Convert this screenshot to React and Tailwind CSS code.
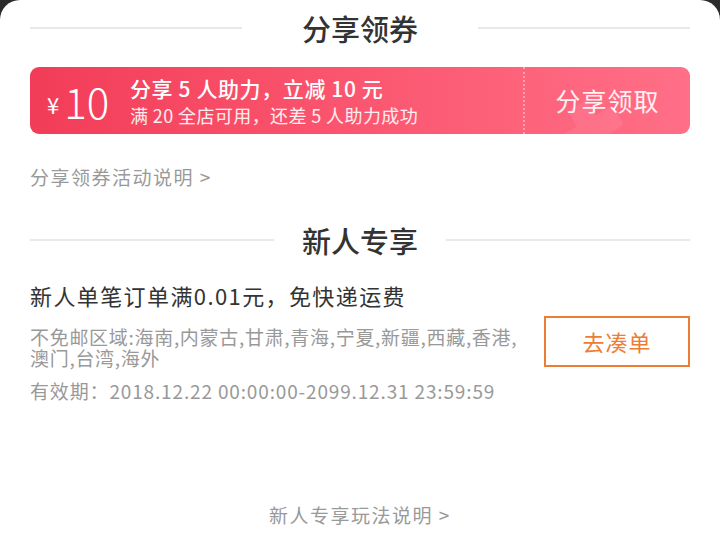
const font = { fontFamily: '"Noto Sans CJK SC", "Noto Sans", sans-serif' };

const SectionTitle = ({ children, gap }) => (
  <div className="flex items-center h-[40px]">
    <div className="flex-1 h-[2px] bg-[#e9e9e9]" />
    <div className={`text-[29px] font-medium text-[#333] leading-[40px] ${gap}`}>{children}</div>
    <div className="flex-1 h-[2px] bg-[#e9e9e9]" />
  </div>
);

const Coupon = () => (
  <div className="mt-[19px] h-[67px] rounded-[9px] flex overflow-hidden bg-gradient-to-r from-[#f23c58] via-[#fb5670] to-[#ff6f87] text-white">
    <div className="flex items-center pl-[17px] w-[100px]">
      <span className="text-[22px] leading-none mt-[6px]">¥</span>
      <span className="text-[42px] font-light leading-none ml-[5px]">10</span>
    </div>
    <div className="flex-1 flex flex-col justify-center">
      <div className="text-[21px] font-medium leading-[26px] tracking-[0.6px]">分享 5 人助力，立减 10 元</div>
      <div className="text-[18px] leading-[24px] text-white/90 mt-[2px] tracking-[0.4px]">满 20 全店可用，还差 5 人助力成功</div>
    </div>
    <div className="relative w-[167px] flex items-center justify-center border-l-2 border-dotted border-white/40">
      <svg className="absolute left-[20px] top-[20px]" width="110" height="60" viewBox="0 0 110 60">
        <g fill="#ffffff" opacity="0.07" transform="rotate(-30 55 40)">
          <rect x="35" y="10" width="22" height="60" rx="4" />
          <rect x="15" y="28" width="62" height="22" rx="4" />
        </g>
      </svg>
      <span className="relative text-[25px] text-white/90 tracking-[1px]">分享领取</span>
    </div>
  </div>
);

export default function App() {
  return (
    <div className="w-[720px] h-[556px] bg-[#2b2b2b]" style={font}>
      <div className="h-full bg-white rounded-t-[20px] px-[30px] pt-[8px] pb-[27px] flex flex-col">
        <SectionTitle gap="px-[60px]">分享领券</SectionTitle>
        <Coupon />
        <div className="mt-[29px] text-[19px] leading-[28px] text-[#999] tracking-[1.5px]">分享领券活动说明 &gt;</div>

        <div className="mt-[29px]">
          <SectionTitle gap="px-[28px]">新人专享</SectionTitle>
        </div>
        <div className="mt-[20px] text-[22px] leading-[30px] text-[#333] tracking-[1.4px]">新人单笔订单满0.01元，免快递运费</div>
        <div className="mt-[6px] flex items-start justify-between">
          <div className="pt-[10px] text-[19px] leading-[21px] text-[#999]">
            <div className="tracking-[0.7px]">不免邮区域:海南,内蒙古,甘肃,青海,宁夏,新疆,西藏,香港,</div>
            <div className="tracking-[0.7px]">澳门,台湾,海外</div>
            <div className="mt-[12px] tracking-[0.85px]">有效期：2018.12.22 00:00:00-2099.12.31 23:59:59</div>
          </div>
          <button className="w-[146px] h-[51px] border-2 border-[#ec7d33] text-[#ec7d33] text-[22px] tracking-[1px] flex items-center justify-center">
            去凑单
          </button>
        </div>

        <div className="mt-auto text-center text-[19px] leading-[28px] text-[#999] tracking-[1.5px]">新人专享玩法说明 &gt;</div>
      </div>
    </div>
  );
}
